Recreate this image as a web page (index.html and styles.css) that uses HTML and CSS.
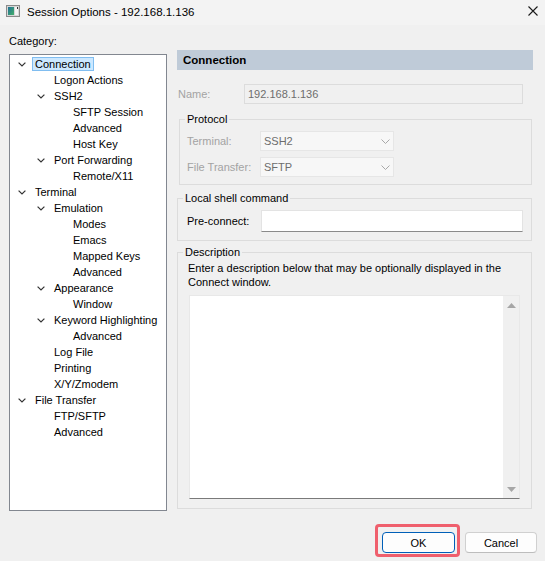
FILE: index.html
```html
<!DOCTYPE html>
<html>
<head>
<meta charset="utf-8">
<title>Session Options</title>
<link rel="stylesheet" href="styles.css">
</head>
<body>
<div class="titlebar">
  <svg class="appicon" width="14" height="12" viewBox="0 0 14 12">
    <defs>
      <linearGradient id="g" x1="0" y1="0" x2="1" y2="1">
        <stop offset="0" stop-color="#1f6f95"/>
        <stop offset="1" stop-color="#45b06a"/>
      </linearGradient>
    </defs>
    <rect x="0.5" y="0.5" width="13" height="11" fill="#d6d6d6" stroke="#8a8a8a"/>
    <rect x="2" y="2" width="6" height="8" fill="url(#g)"/>
    <rect x="9" y="2" width="3" height="8" fill="#f4f4f4"/>
    <rect x="11" y="2" width="1" height="2" fill="#333"/>
  </svg>
  <span class="title">Session Options - 192.168.1.136</span>
  <svg class="close" width="10" height="10" viewBox="0 0 10 10">
    <path d="M0.5 0.5 L9.5 9.5 M9.5 0.5 L0.5 9.5" stroke="#1a1a1a" stroke-width="1.1" fill="none"/>
  </svg>
</div>

<div class="main">
  <div class="left">
    <div class="cat-label">Category:</div>
    <div class="tree">
      <div class="row d0 sel"><span class="twist"><svg width="8" height="5" viewBox="0 0 8 5"><path d="M0.6 0.6 L4 4 L7.4 0.6" fill="none" stroke="#333" stroke-width="1.2"/></svg></span><span class="lbl">Connection</span></div>
      <div class="row d1"><span class="twist"></span><span class="lbl">Logon Actions</span></div>
      <div class="row d1"><span class="twist"><svg width="8" height="5" viewBox="0 0 8 5"><path d="M0.6 0.6 L4 4 L7.4 0.6" fill="none" stroke="#333" stroke-width="1.2"/></svg></span><span class="lbl">SSH2</span></div>
      <div class="row d2"><span class="twist"></span><span class="lbl">SFTP Session</span></div>
      <div class="row d2"><span class="twist"></span><span class="lbl">Advanced</span></div>
      <div class="row d2"><span class="twist"></span><span class="lbl">Host Key</span></div>
      <div class="row d1"><span class="twist"><svg width="8" height="5" viewBox="0 0 8 5"><path d="M0.6 0.6 L4 4 L7.4 0.6" fill="none" stroke="#333" stroke-width="1.2"/></svg></span><span class="lbl">Port Forwarding</span></div>
      <div class="row d2"><span class="twist"></span><span class="lbl">Remote/X11</span></div>
      <div class="row d0"><span class="twist"><svg width="8" height="5" viewBox="0 0 8 5"><path d="M0.6 0.6 L4 4 L7.4 0.6" fill="none" stroke="#333" stroke-width="1.2"/></svg></span><span class="lbl">Terminal</span></div>
      <div class="row d1"><span class="twist"><svg width="8" height="5" viewBox="0 0 8 5"><path d="M0.6 0.6 L4 4 L7.4 0.6" fill="none" stroke="#333" stroke-width="1.2"/></svg></span><span class="lbl">Emulation</span></div>
      <div class="row d2"><span class="twist"></span><span class="lbl">Modes</span></div>
      <div class="row d2"><span class="twist"></span><span class="lbl">Emacs</span></div>
      <div class="row d2"><span class="twist"></span><span class="lbl">Mapped Keys</span></div>
      <div class="row d2"><span class="twist"></span><span class="lbl">Advanced</span></div>
      <div class="row d1"><span class="twist"><svg width="8" height="5" viewBox="0 0 8 5"><path d="M0.6 0.6 L4 4 L7.4 0.6" fill="none" stroke="#333" stroke-width="1.2"/></svg></span><span class="lbl">Appearance</span></div>
      <div class="row d2"><span class="twist"></span><span class="lbl">Window</span></div>
      <div class="row d1"><span class="twist"><svg width="8" height="5" viewBox="0 0 8 5"><path d="M0.6 0.6 L4 4 L7.4 0.6" fill="none" stroke="#333" stroke-width="1.2"/></svg></span><span class="lbl">Keyword Highlighting</span></div>
      <div class="row d2"><span class="twist"></span><span class="lbl">Advanced</span></div>
      <div class="row d1"><span class="twist"></span><span class="lbl">Log File</span></div>
      <div class="row d1"><span class="twist"></span><span class="lbl">Printing</span></div>
      <div class="row d1"><span class="twist"></span><span class="lbl">X/Y/Zmodem</span></div>
      <div class="row d0"><span class="twist"><svg width="8" height="5" viewBox="0 0 8 5"><path d="M0.6 0.6 L4 4 L7.4 0.6" fill="none" stroke="#333" stroke-width="1.2"/></svg></span><span class="lbl">File Transfer</span></div>
      <div class="row d1"><span class="twist"></span><span class="lbl">FTP/SFTP</span></div>
      <div class="row d1"><span class="twist"></span><span class="lbl">Advanced</span></div>
    </div>
  </div>

  <div class="right">
    <div class="header">Connection</div>

    <div class="name-row">
      <span class="name-label">Name:</span>
      <div class="name-input">192.168.1.136</div>
    </div>

    <fieldset class="group protocol">
      <legend>Protocol</legend>
      <div class="frow first">
        <span class="flabel dis">Terminal:</span>
        <div class="select">SSH2<svg class="dd" width="9" height="5" viewBox="0 0 9 5"><path d="M0.5 0.5 L4.5 4.5 L8.5 0.5" fill="none" stroke="#a8a8a8" stroke-width="1"/></svg></div>
      </div>
      <div class="frow">
        <span class="flabel dis">File Transfer:</span>
        <div class="select">SFTP<svg class="dd" width="9" height="5" viewBox="0 0 9 5"><path d="M0.5 0.5 L4.5 4.5 L8.5 0.5" fill="none" stroke="#a8a8a8" stroke-width="1"/></svg></div>
      </div>
    </fieldset>

    <fieldset class="group shell">
      <legend>Local shell command</legend>
      <div class="frow first">
        <span class="flabel pre">Pre-connect:</span>
        <div class="text-input"></div>
      </div>
    </fieldset>

    <fieldset class="group desc">
      <legend>Description</legend>
      <p class="desc-text">Enter a description below that may be optionally displayed in the<br>Connect window.</p>
      <div class="textarea">
        <div class="ta-body"></div>
        <div class="sb">
          <svg width="9" height="5" viewBox="0 0 9 5"><path d="M0 5 L4.5 0 L9 5 Z" fill="#a6a6a6"/></svg>
          <svg width="9" height="5" viewBox="0 0 9 5"><path d="M0 0 L4.5 5 L9 0 Z" fill="#a6a6a6"/></svg>
        </div>
      </div>
    </fieldset>
  </div>
</div>

<div class="buttons">
  <div class="highlight"><button class="btn default">OK</button></div>
  <button class="btn">Cancel</button>
</div>
</body>
</html>
```

FILE: styles.css
```css
* { box-sizing: border-box; }

body {
  margin: 0;
  width: 545px;
  height: 561px;
  overflow: hidden;
  background: #f0f0f0;
  font-family: "Liberation Sans", Arial, sans-serif;
  font-size: 11px;
  color: #000;
}

/* Title bar */
.titlebar {
  height: 25px;
  display: flex;
  align-items: center;
  background: #f3f3f3;
}
.appicon { margin-left: 6px; margin-top: -3px; }
.title { margin-left: 7px; margin-top: -2px; font-size: 11.5px; }
.close { margin-left: auto; margin-right: 7px; margin-top: -4px; }

/* Main area */
.main {
  display: flex;
  height: 487px;
}

.left {
  width: 158px;
  margin-left: 9px;
  display: flex;
  flex-direction: column;
  padding-bottom: 1px;
}
.cat-label {
  margin-top: 9px;
  line-height: 14px;
}
.tree {
  margin-top: 6px;
  flex: 1;
  background: #fff;
  border: 1px solid #828790;
  padding-top: 1px;
}
.row {
  display: flex;
  align-items: center;
  height: 16px;
  white-space: nowrap;
}
.row.d0 { padding-left: 6px; }
.row.d1 { padding-left: 25px; }
.row.d2 { padding-left: 44px; }
.twist {
  width: 16px;
  height: 16px;
  display: flex;
  align-items: center;
}
.twist svg { margin-left: 2px; }
.lbl {
  padding: 0 2px;
  border: 1px solid transparent;
  line-height: 12px;
}
.sel .lbl {
  background: #cce8ff;
  border-color: #80bdf0;
}

/* Right column */
.right {
  margin-left: 10px;
  width: 356px;
  display: flex;
  flex-direction: column;
}
.header {
  margin-top: 25px;
  height: 20px;
  line-height: 20px;
  padding-left: 6px;
  background: #bfcbd8;
  font-weight: bold;
  font-size: 11.5px;
}

.name-row {
  margin-top: 14px;
  display: flex;
  align-items: center;
}
.name-label {
  width: 67px;
  padding-left: 1px;
  color: #a3a3a3;
}
.name-input {
  width: 279px;
  height: 20px;
  line-height: 18px;
  padding-left: 3px;
  border: 1px solid #dcdcdc;
  color: #6d6d6d;
}

.group {
  margin: 0;
  border: 1px solid #dcdcdc;
  min-width: 0;
}
.group legend {
  padding: 0 2px;
  line-height: 14px;
}
.protocol {
  margin: 8px 1px 0 2px;
  width: 353px;
  padding: 0 0 7px 7px;
}
.protocol legend { margin-left: -2px; }
.shell {
  margin-top: 6px;
  width: 355px;
  padding: 0 0 8px 9px;
}
.shell legend { margin-left: -4px; }
.desc {
  margin-top: 4px;
  width: 355px;
  padding: 0 0 9px 10px;
}
.desc legend { margin-left: -5px; }

.frow {
  display: flex;
  align-items: center;
  margin-top: 6px;
}
.frow.first { margin-top: 5px; }
.flabel { width: 73px; }
.flabel.pre { width: 74px; }
.dis { color: #a3a3a3; }

.select {
  position: relative;
  width: 134px;
  height: 20px;
  line-height: 18px;
  padding-left: 3px;
  background: #f7f7f7;
  border: 1px solid #e6e6e6;
  color: #6d6d6d;
}
.dd {
  position: absolute;
  right: 3px;
  top: 7px;
}

.text-input {
  width: 262px;
  height: 22px;
  background: #fff;
  border: 1px solid #e3e3e3;
  border-bottom-color: #8a8a8a;
}

.desc-text {
  margin: 2px 0 0 0;
  line-height: 14px;
}
.textarea {
  margin: 6px 0 0 1px;
  width: 331px;
  height: 204px;
  display: flex;
  background: #fff;
  border: 1px solid #e8e8e8;
  border-bottom-color: #7a7a7a;
}
.ta-body { flex: 1; }
.sb {
  width: 16px;
  background: #f0f0f0;
  display: flex;
  flex-direction: column;
  justify-content: space-between;
  align-items: center;
  padding: 7px 0 6px 0;
}

/* Buttons */
.buttons {
  margin-top: 12px;
  display: flex;
  justify-content: flex-end;
  align-items: flex-start;
  gap: 5px;
  padding-right: 8px;
}
.highlight {
  display: flex;
  border: 3px solid #ef5f6d;
  border-radius: 4px;
  padding: 5px 2px 1px 4px;
}
.btn {
  margin: 0;
  width: 72px;
  height: 21px;
  padding: 0;
  font-family: "Liberation Sans", Arial, sans-serif;
  font-size: 11px;
  color: #000;
  background: #fdfdfd;
  border: 1px solid #d0d0d0;
  border-bottom-color: #bdbdbd;
  border-radius: 4px;
}
.buttons > .btn { margin-top: 8px; }
.btn.default {
  width: 73px;
  border: 1px solid #005fb8;
}
```
